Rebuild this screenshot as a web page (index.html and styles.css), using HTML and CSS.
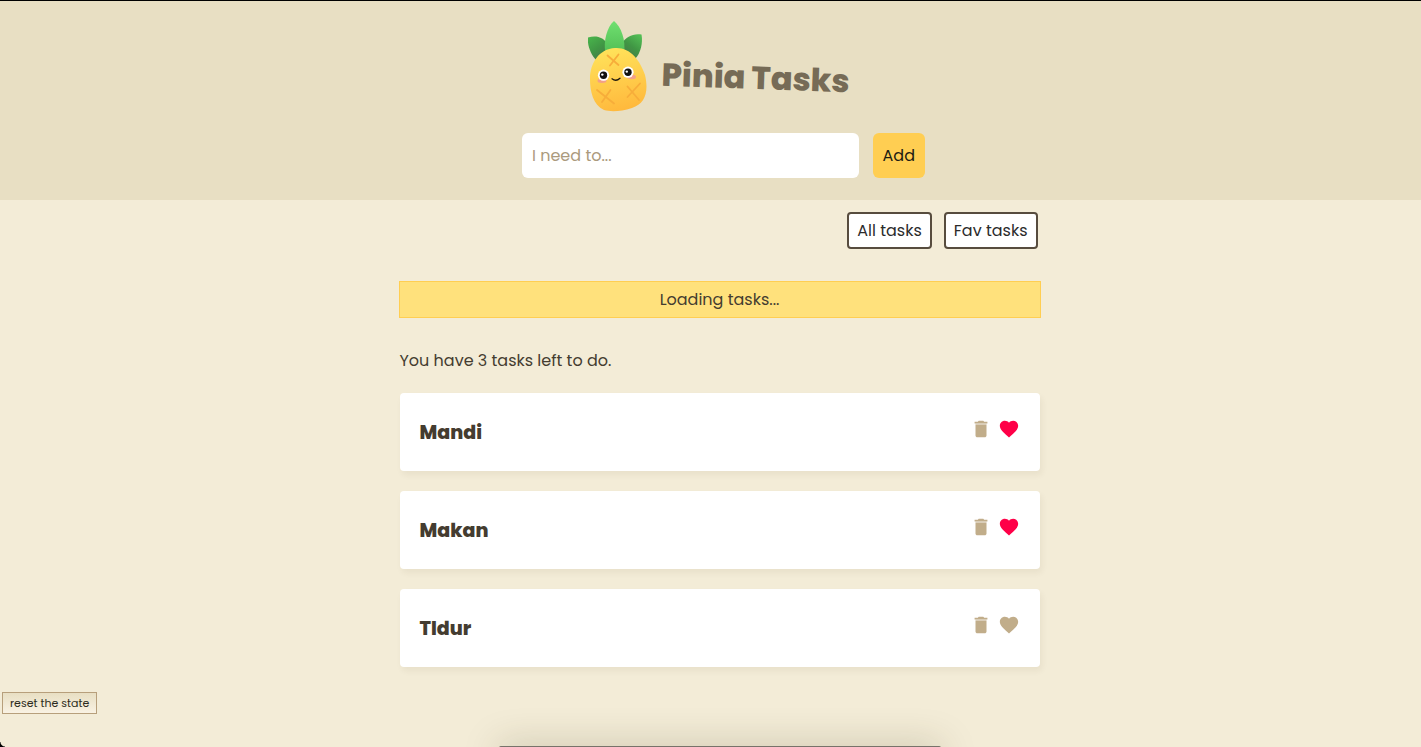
FILE: index.html
```html
<!DOCTYPE html>
<html lang="en">
<head>
<meta charset="utf-8">
<title>Pinia Tasks</title>
<link rel="stylesheet" href="styles.css">
</head>
<body>
<div class="window">
  <header class="header">
    <div class="brand">
      <svg class="logo" viewBox="0 0 60 92" aria-hidden="true">
        <defs>
          <linearGradient id="leaf" x1="0" y1="0" x2="0" y2="1"><stop offset="0" stop-color="#70e070"/><stop offset="1" stop-color="#51bd54"/></linearGradient>
          <linearGradient id="leafLeft" x1="0.2" y1="0" x2="0.8" y2="1"><stop offset="0" stop-color="#48b24b"/><stop offset="0.5" stop-color="#409644"/><stop offset="1" stop-color="#49744a"/></linearGradient>
          <linearGradient id="leafRight" x1="0.8" y1="0" x2="0.2" y2="1"><stop offset="0" stop-color="#52bd54"/><stop offset="0.5" stop-color="#409644"/><stop offset="1" stop-color="#49744a"/></linearGradient>
          <linearGradient id="fruit" x1="0.4" y1="0" x2="0.6" y2="1"><stop offset="0" stop-color="#ffe25a"/><stop offset="1" stop-color="#ffb83c"/></linearGradient>
        </defs>
        <path fill="url(#leafLeft)" d="M0 17.500C8 15 16 17 20 25L20 31L8 40C3 35-1 25 0 17.500Z"/>
        <path fill="url(#leafRight)" d="M53.500 14.500C45 13 38 17 34 23L34 30L47 39C53 33 55 22 53.500 14.500Z"/>
        <path fill="url(#leaf)" d="M26 1C19 7 15 21 17.500 34H36C38 19 33 7 26 1Z"/>
        <path fill="url(#fruit)" d="M27 28C42 27 52 40 57 55C61 72 57 84 44 88C33 91.500 23 92 16 90C5 85 2 71 2 59C2 43 11 29 27 28Z"/>
        <g fill="none" stroke="#f7ad3a" stroke-width="1.800" stroke-linecap="round">
          <path d="M19.500 35.500L30.500 45M30.500 34.500L22 45.500M39.500 66.500L51 80M52 63.500L39.500 77M9 70L26 83.500M22.500 70L14 82"/>
        </g>
        <g fill="#f3a087"><ellipse cx="14" cy="60.800" rx="4.500" ry="2.200"/><ellipse cx="43.500" cy="57" rx="4.500" ry="2.200"/></g>
        <g fill="#fff"><circle cx="15.500" cy="55.200" r="5.600"/><circle cx="40" cy="52.200" r="5.600"/></g>
        <g fill="#111"><circle cx="15.500" cy="55.200" r="3.700"/><circle cx="40" cy="52.200" r="3.700"/></g>
        <g fill="#fff"><circle cx="14.300" cy="54.600" r="1.200"/><circle cx="38.800" cy="51.600" r="1.200"/></g>
        <path d="M24 58.800Q28 62 32 58.300" fill="none" stroke="#20190e" stroke-width="1.300" stroke-linecap="round"/>
      </svg>
      <h1 class="title">Pinia Tasks</h1>
    </div>
    <form class="new-task">
      <input class="new-task-input" type="text" placeholder="I need to..." aria-label="New task">
      <button class="new-task-add" type="button">Add</button>
    </form>
  </header>
  <main class="content">
    <nav class="filter">
      <button class="filter-button" type="button">All tasks</button>
      <button class="filter-button" type="button">Fav tasks</button>
    </nav>
    <div class="loading" role="status">Loading tasks...</div>
    <p class="summary">You have 3 tasks left to do.</p>
    <div class="tasks">
      <article class="task">
        <h3 class="task-title">Mandi</h3>
        <div class="actions">
          <button class="icon-button" type="button" aria-label="Delete Mandi"><svg class="icon" viewBox="0 0 24 24"><use href="#trash"/></svg></button>
          <button class="icon-button favourite" type="button" aria-label="Favourite Mandi"><svg class="icon" viewBox="0 0 24 24"><use href="#heart"/></svg></button>
        </div>
      </article>
      <article class="task">
        <h3 class="task-title">Makan</h3>
        <div class="actions">
          <button class="icon-button" type="button" aria-label="Delete Makan"><svg class="icon" viewBox="0 0 24 24"><use href="#trash"/></svg></button>
          <button class="icon-button favourite" type="button" aria-label="Favourite Makan"><svg class="icon" viewBox="0 0 24 24"><use href="#heart"/></svg></button>
        </div>
      </article>
      <article class="task">
        <h3 class="task-title">TIdur</h3>
        <div class="actions">
          <button class="icon-button" type="button" aria-label="Delete TIdur"><svg class="icon" viewBox="0 0 24 24"><use href="#trash"/></svg></button>
          <button class="icon-button" type="button" aria-label="Favourite TIdur"><svg class="icon" viewBox="0 0 24 24"><use href="#heart"/></svg></button>
        </div>
      </article>
    </div>
  </main>
  <button class="reset" type="button">reset the state</button>
  <div class="dock"></div>
  <div class="corner"></div>
</div>
<svg class="symbols" aria-hidden="true">
  <symbol id="trash" viewBox="0 0 24 24"><path d="M6 19c0 1.100.9 2 2 2h8c1.100 0 2-.9 2-2V7H6v12zM19 4h-3.500l-1-1h-5l-1 1H5v2h14V4z"/><path opacity=".45" d="M6 6h12v1H6z"/></symbol>
  <symbol id="heart" viewBox="0 0 24 24"><path d="M12 21.350l-1.450-1.320C5.400 15.360 2 12.280 2 8.500 2 5.420 4.420 3 7.500 3c1.740 0 3.410.81 4.500 2.090C13.090 3.810 14.760 3 16.500 3 19.580 3 22 5.420 22 8.500c0 3.780-3.400 6.860-8.550 11.540L12 21.350z"/></symbol>
</svg>
</body>
</html>
```
FILE: styles.css
```css
* {
  box-sizing: border-box;
}

body {
  margin: 0;
  background: #f3ecd7;
  color: #443c30;
  font-family: Poppins, Inter, "Open Sans", sans-serif;
  font-size: 16px;
  line-height: 24px;
}

button,
input {
  font: inherit;
}

h1,
h3,
p {
  margin: 0;
}

.window {
  position: relative;
  min-height: 100vh;
  border-top: 1px solid #000;
  overflow: hidden;
}

.header {
  padding: 19px 0 22px 18px;
  background: #e8dfc3;
}

.brand {
  display: flex;
  justify-content: center;
  align-items: center;
  gap: 14px;
}

.logo {
  width: 60px;
  height: 92px;
}

.title {
  padding-top: 24px;
  color: #766b56;
  font-size: 32px;
  font-weight: 800;
  line-height: 48px;
  transform: rotate(2deg);
}

.new-task {
  display: grid;
  grid-template-columns: 1fr auto;
  gap: 14px;
  width: 411px;
  max-width: 100%;
  margin: 21px auto 0;
  padding-left: 8px;
}

.new-task-input {
  min-width: 0;
  padding: 10px;
  border: 0;
  border-radius: 6px;
  background: #fff;
  color: #443c30;
}

.new-task-input::placeholder {
  color: #ab9a7d;
  opacity: 1;
}

.new-task-add {
  padding: 10px;
  border: 0;
  border-radius: 6px;
  background: #ffce52;
  color: #201b12;
  line-height: 25px;
}

.content {
  max-width: 658px;
  margin: 0 auto;
  padding-left: 18px;
}

.filter {
  display: flex;
  justify-content: flex-end;
  gap: 12px;
  padding: 12px 2px 32px;
}

.filter-button {
  padding: 4px 8px;
  border: 2px solid #574c3e;
  border-radius: 4px;
  background: #fff;
  color: #2b2b2b;
  line-height: 25px;
}

.loading {
  margin: 0 -1px;
  padding: 5px;
  border: 1px solid #ffce52;
  background: #ffe17c;
  line-height: 25px;
  text-align: center;
}

.summary {
  padding: 31px 0 20px;
}

.tasks {
  display: grid;
  gap: 20px;
}

.task {
  display: flex;
  justify-content: space-between;
  align-items: flex-start;
  padding: 25px 20px 23px;
  border-radius: 4px;
  background: #fff;
  box-shadow: 2px 4px 6px rgba(60, 50, 10, 0.06);
}

.task-title {
  font-size: 19px;
  font-weight: 800;
  line-height: 30px;
}

.actions {
  display: flex;
  gap: 6px;
}

.icon-button {
  display: block;
  padding: 0;
  border: 0;
  background: none;
  color: #c1ad8a;
}

.favourite {
  color: #ff0048;
}

.icon {
  display: block;
  width: 22px;
  height: 22px;
  fill: currentColor;
}

.reset {
  display: block;
  margin: 25px 0 32px 2px;
  padding: 0 7px;
  border: 1px solid #b79f7b;
  background: linear-gradient(#e8dfc3, #f9f2e3);
  color: #2b2b20;
  font-size: 11px;
  line-height: 20px;
}

.dock {
  position: absolute;
  bottom: -19px;
  left: calc(50% + 9px);
  width: 442px;
  height: 20px;
  border-radius: 2px;
  background: #77736a;
  box-shadow: 0 0 36px rgba(60, 50, 20, 0.25);
  transform: translateX(-50%);
}

.corner {
  position: absolute;
  bottom: 0;
  left: 0;
  width: 5px;
  height: 5px;
  background: radial-gradient(circle at 100% 0, transparent 4px, #000 5px);
}

.symbols {
  position: absolute;
  width: 0;
  height: 0;
}
```
